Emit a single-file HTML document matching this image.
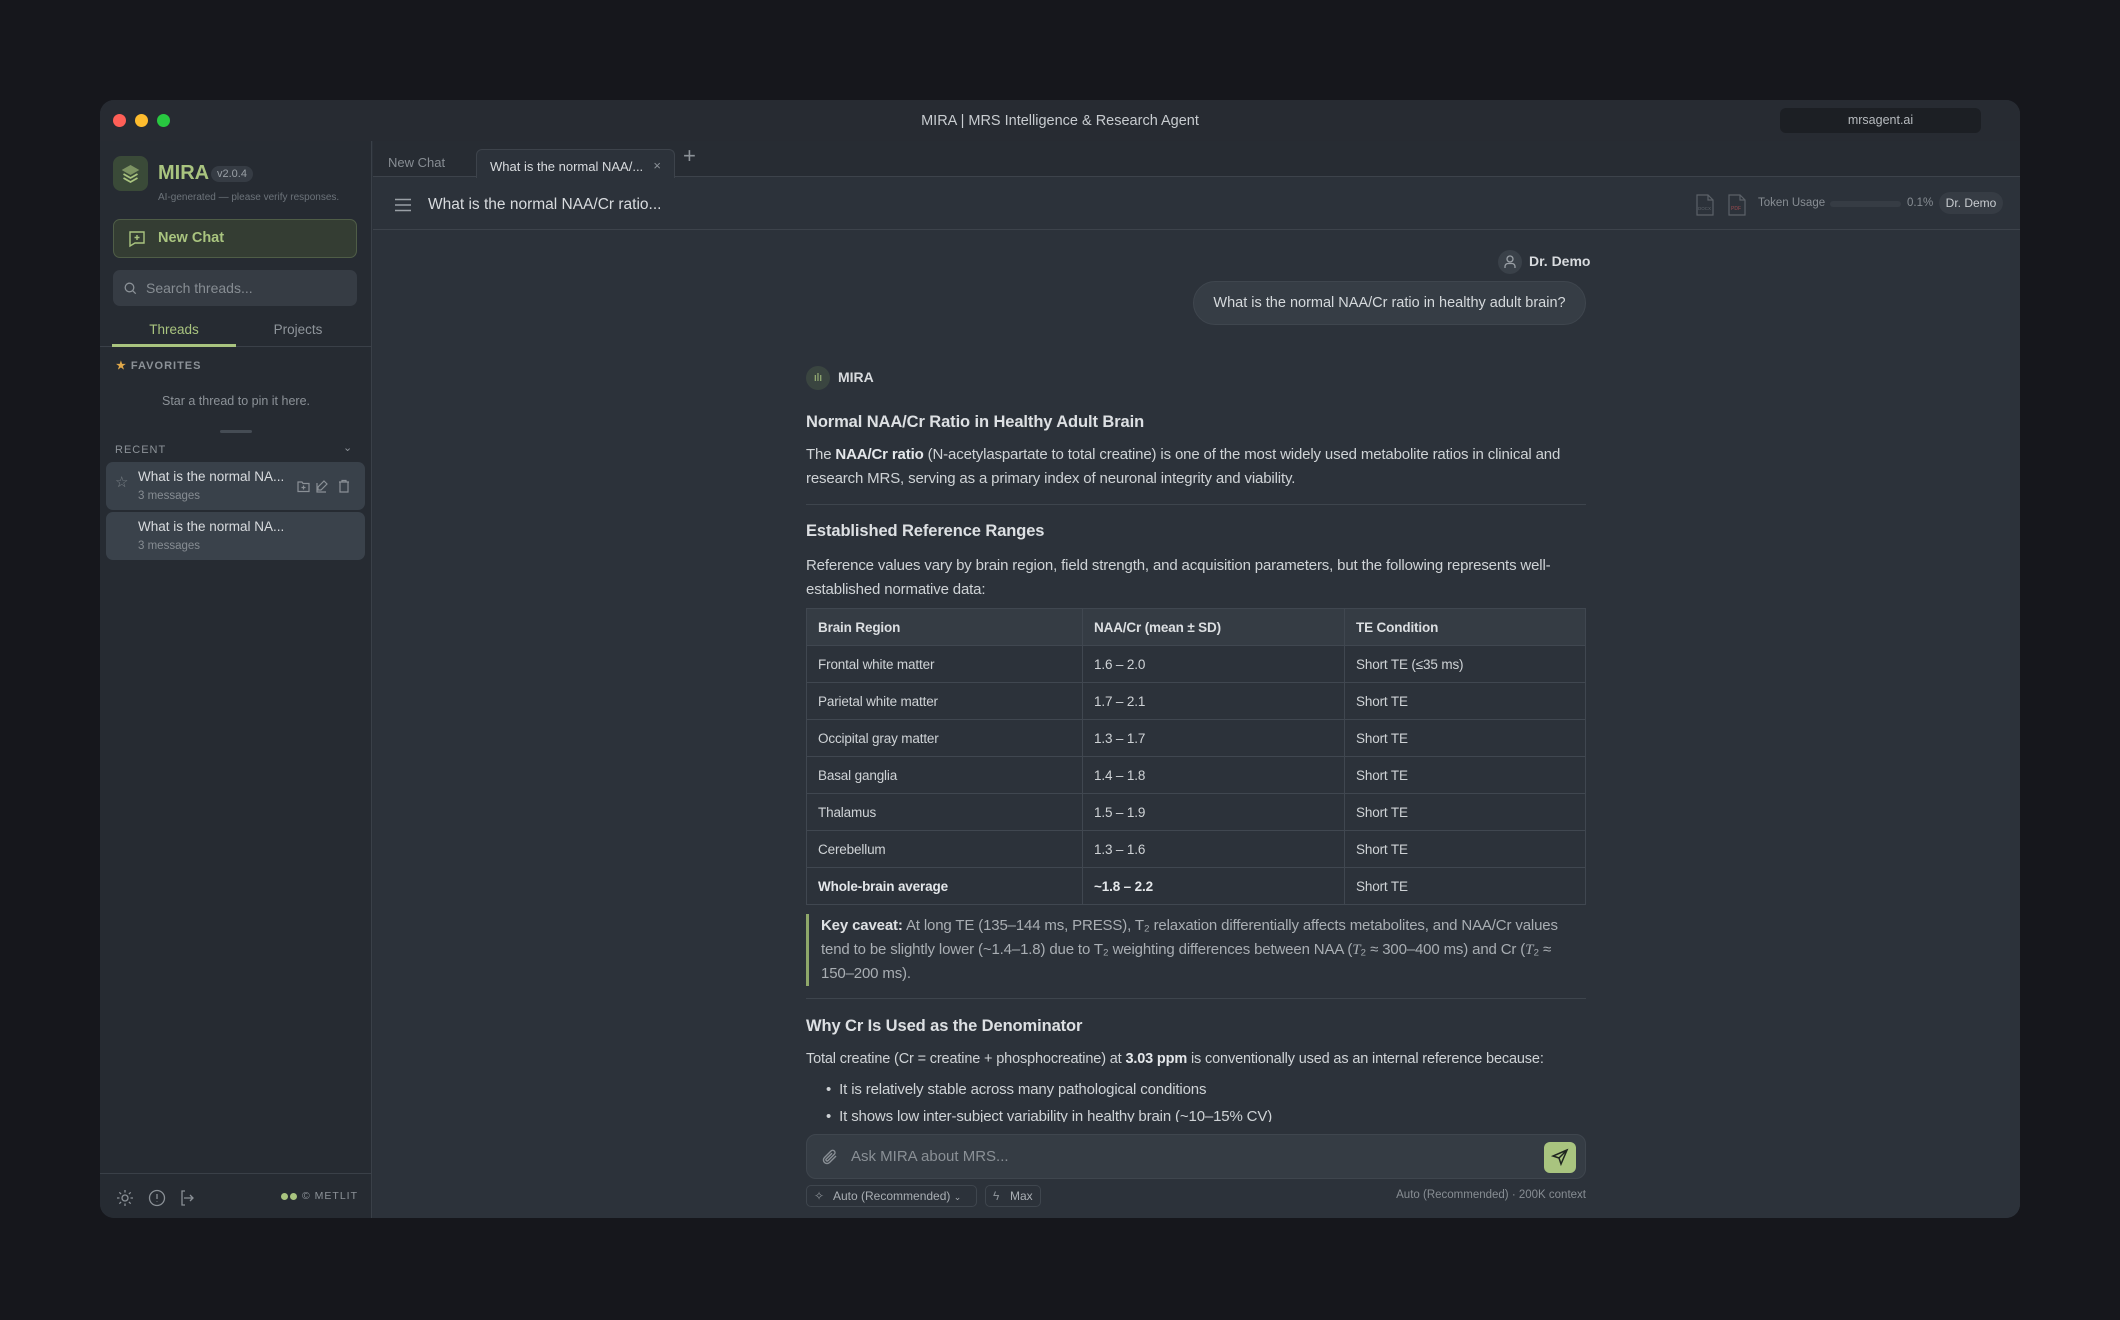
<!DOCTYPE html>
<html><head><meta charset="utf-8"><style>
*{box-sizing:border-box;margin:0;padding:0}
body{width:2120px;height:1320px;background:#16171c;font-family:"Liberation Sans",sans-serif;color:#d5d9dc;position:relative;overflow:hidden}
.win{position:absolute;left:100px;top:100px;width:1920px;height:1118px;background:#2b3139;border-radius:14px;overflow:hidden}
.titlebar{position:absolute;left:0;top:0;width:1920px;height:41px;background:#272b32}
.dot{position:absolute;top:14px;width:13px;height:13px;border-radius:50%}
.ttl{position:absolute;left:0;right:0;top:13px;text-align:center;font-size:14.5px;color:#c8ccd0}
.url{position:absolute;left:1680px;top:8px;width:201px;height:25px;border-radius:6px;background:#1c1f24;color:#b7bbbf;font-size:12.5px;text-align:center;line-height:25px}
.side{position:absolute;left:0;top:41px;width:272px;height:1077px;background:#262b32;border-right:1px solid #3a4048}
.abs{position:absolute}
.main{position:absolute;left:273px;top:41px;width:1647px;height:1077px;background:#2c323a}
.tabs{position:absolute;left:0;top:0;width:1647px;height:36px;background:#272c33;border-bottom:1px solid #3d434b}
.hdr{position:absolute;left:0;top:36px;width:1647px;height:53px;border-bottom:1px solid #3d434b}
.c{position:absolute;left:433px;width:780px;font-size:15px;letter-spacing:-0.15px;color:#cfd3d6}
.p{line-height:24px}
h3.c{font-size:16.5px;font-weight:bold;color:#dde0e3;letter-spacing:-0.1px}
table{border-collapse:collapse;width:780px;font-size:13.5px}
td,th{border:1px solid #404750;height:37px;padding:0 11px;text-align:left}
th{background:#353c44;font-weight:bold;color:#dcdfe2}
td{color:#cfd3d6}
.hr{height:1px;background:#3e454d}
</style></head><body>
<div class="win">
 <div class="titlebar">
  <div class="dot" style="left:13px;background:#fe5f57"></div>
  <div class="dot" style="left:35px;background:#febc2e"></div>
  <div class="dot" style="left:57px;background:#28c840"></div>
  <div class="ttl">MIRA | MRS Intelligence &amp; Research Agent</div>
  <div class="url">mrsagent.ai</div>
 </div>
 <div class="side">
  <div class="abs" style="left:13px;top:15px;width:35px;height:35px;border-radius:8px;background:#3a4a38">
   <svg width="35" height="35" viewBox="0 0 35 35" fill="none" stroke="#a9c47f" stroke-width="1.8"><path d="M17.5 10l7 4-7 4-7-4z" fill="#a9c47f" opacity=".6"/><path d="M10.5 18l7 4 7-4M10.5 22l7 4 7-4"/></svg>
  </div>
  <div class="abs" style="left:58px;top:21px;font-size:20px;font-weight:bold;color:#a9c47f">MIRA</div>
  <div class="abs" style="left:111px;top:25px;padding:2px 6px;border-radius:9px;background:#363c44;font-size:11px;color:#9aa0a6">v2.0.4</div>
  <div class="abs" style="left:58px;top:51px;font-size:10px;color:#6c737a">AI-generated — please verify responses.</div>
  <div class="abs" style="left:13px;top:78px;width:244px;height:39px;border-radius:7px;background:#343d33;border:1px solid #4f5d47;color:#a9c47f;font-size:14.5px;font-weight:bold;line-height:37px;padding-left:44px">New Chat
   <svg class="abs" style="left:14px;top:10px" width="18" height="18" viewBox="0 0 18 18" fill="none" stroke="#a9c47f" stroke-width="1.4"><path d="M2 2h14v11H7l-5 3z"/><path d="M9 5v5M6.5 7.5h5"/></svg></div>
  <div class="abs" style="left:13px;top:129px;width:244px;height:36px;border-radius:7px;background:#363c44;color:#878d93;font-size:14px;line-height:36px;padding-left:33px">Search threads...
   <svg class="abs" style="left:11px;top:12px" width="13" height="13" viewBox="0 0 13 13" fill="none" stroke="#8a9096" stroke-width="1.3"><circle cx="5.5" cy="5.5" r="4.3"/><path d="M8.7 8.7l3 3"/></svg></div>
  <div class="abs" style="left:12px;top:181px;width:124px;text-align:center;font-size:13.5px;color:#a9c47f">Threads</div>
  <div class="abs" style="left:136px;top:181px;width:124px;text-align:center;font-size:13.5px;color:#8f959b">Projects</div>
  <div class="abs" style="left:0;top:205px;width:272px;height:1px;background:#3a4048"></div>
  <div class="abs" style="left:12px;top:203px;width:124px;height:3px;background:#a9c47f"></div>
  <div class="abs" style="left:16px;top:218px;font-size:11px;letter-spacing:1px;color:#8c9298;font-weight:bold"><span style="color:#e0a84a">★</span> FAVORITES</div>
  <div class="abs" style="left:0;width:272px;top:253px;text-align:center;font-size:12.5px;color:#8c9298">Star a thread to pin it here.</div>
  <div class="abs" style="left:120px;top:289px;width:32px;height:3px;border-radius:2px;background:#454c54"></div>
  <div class="abs" style="left:15px;top:303px;font-size:11px;letter-spacing:1px;color:#8c9298">RECENT</div>
  <div class="abs" style="left:243px;top:300px;font-size:11px;color:#8c9298">⌄</div>
  <div class="abs" style="left:6px;top:321px;width:259px;height:48px;border-radius:7px;background:#39414a">
   <div class="abs" style="left:9px;top:11px;font-size:15px;color:#7a8187">☆</div>
   <div class="abs" style="left:32px;top:7px;font-size:13.5px;color:#d8dbde">What is the normal NA...</div>
   <div class="abs" style="left:32px;top:28px;font-size:11.5px;color:#878d93">3 messages</div>
   <svg class="abs" style="left:191px;top:16px" width="62" height="16" viewBox="0 0 62 16" fill="none" stroke="#8a9096" stroke-width="1.2"><path d="M1 4h4l1 1.5h6v8H1z M6.5 7.5v4M4.5 9.5h4"/><path d="M27 3l3 3-6 6h-3v-3z M20 5v9h9"/><path d="M42 4h10M45 4V2.5h4V4M43 4.5v9.5h8V4.5"/></svg>
  </div>
  <div class="abs" style="left:6px;top:371px;width:259px;height:48px;border-radius:7px;background:#3a424b">
   <div class="abs" style="left:32px;top:7px;font-size:13.5px;color:#d8dbde">What is the normal NA...</div>
   <div class="abs" style="left:32px;top:28px;font-size:11.5px;color:#878d93">3 messages</div>
  </div>
  <div class="abs" style="left:0;top:1032px;width:272px;height:1px;background:#3a4048"></div>
  <svg class="abs" style="left:16px;top:1047px" width="80" height="20" viewBox="0 0 80 20" fill="none" stroke="#8a9096" stroke-width="1.3"><circle cx="9" cy="10" r="3"/><path d="M9 2v2.5M9 15.5V18M1 10h2.5M14.5 10H17M3.3 4.3l1.8 1.8M12.9 13.9l1.8 1.8M3.3 15.7l1.8-1.8M12.9 6.1l1.8-1.8"/><circle cx="41" cy="10" r="7.5"/><path d="M41 6v5M41 13.5v.5"/><path d="M69 3h-3v14h3M68 10h9M74 7l3 3-3 3"/></svg>
  <div class="abs" style="left:181px;top:1052px;width:7px;height:7px;border-radius:50%;background:#a9c47f"></div>
  <div class="abs" style="left:190px;top:1052px;width:7px;height:7px;border-radius:50%;background:#a9c47f"></div>
  <div class="abs" style="left:202px;top:1049px;font-size:10.5px;letter-spacing:1px;color:#8c9298">© METLIT</div>
 </div>
 <div class="main">
  <div class="tabs">
   <div class="abs" style="left:15px;top:14px;font-size:13px;color:#878d93">New Chat</div>
   <div class="abs" style="left:103px;top:8px;width:199px;height:29px;background:#2c323a;border:1px solid #3d434b;border-bottom:none;border-radius:6px 6px 0 0;font-size:13px;color:#d8dbde;padding:9px 0 0 13px">What is the normal NAA/...<span style="position:absolute;right:13px;top:8px;color:#8c9298">×</span></div>
   <div class="abs" style="left:310px;top:2px;font-size:22px;color:#8c9298;font-weight:300">+</div>
  </div>
  <div class="hdr">
   <svg class="abs" style="left:22px;top:21px" width="16" height="14" viewBox="0 0 16 14" stroke="#9aa0a6" stroke-width="1.5"><path d="M0 1.5h16M0 7h16M0 12.5h16"/></svg>
   <div class="abs" style="left:55px;top:19px;font-size:15.5px;color:#d8dbde">What is the normal NAA/Cr ratio...</div>
   <svg class="abs" style="left:1323px;top:17px" width="52" height="22" viewBox="0 0 52 22" fill="none" stroke="#5b6168" stroke-width="1.2"><path d="M1 1h11l5 5v15H1z M12 1v5h5"/><path d="M33 1h11l5 5v15H33z M44 1v5h5"/><text x="2" y="16" font-size="4.5" fill="#5b6168" stroke="none" font-family="Liberation Sans">DOCX</text><text x="35" y="16" font-size="5" fill="#9a4a4f" stroke="none" font-family="Liberation Sans">PDF</text></svg>
   <div class="abs" style="left:1385px;top:20px;font-size:11.5px;color:#878d93">Token Usage</div>
   <div class="abs" style="left:1457px;top:24px;width:71px;height:6px;border-radius:3px;background:#363c44"></div>
   <div class="abs" style="left:1534px;top:20px;font-size:11.5px;color:#878d93">0.1%</div>
   <div class="abs" style="left:1566px;top:15px;width:64px;height:22px;border-radius:11px;background:#363c44;font-size:12px;color:#c8ccd0;text-align:center;line-height:22px">Dr. Demo</div>
  </div>
  <!-- chat -->
  <div class="abs" style="left:1125px;top:109px;width:24px;height:24px;border-radius:50%;background:#3a4149"><svg width="24" height="24" viewBox="0 0 24 24" fill="none" stroke="#9aa0a6" stroke-width="1.3"><circle cx="12" cy="9" r="3"/><path d="M7 18v-1.5a3 3 0 0 1 3-3h4a3 3 0 0 1 3 3V18"/></svg></div>
  <div class="abs" style="left:1156px;top:112px;font-size:14px;font-weight:bold;color:#d8dbde">Dr. Demo</div>
  <div class="abs" style="left:820px;top:140px;width:393px;height:44px;border-radius:22px;background:#363d45;border:1px solid #3f464e;font-size:14.5px;color:#d5d9dc;line-height:42px;text-align:center">What is the normal NAA/Cr ratio in healthy adult brain?</div>
  <div class="abs" style="left:433px;top:225px;width:24px;height:24px;border-radius:50%;background:#3a4540;color:#a9c47f;font-size:11px;text-align:center;line-height:24px">ılı</div>
  <div class="abs" style="left:465px;top:228px;font-size:14px;font-weight:bold;color:#d8dbde">MIRA</div>
  <h3 class="c" style="top:272px">Normal NAA/Cr Ratio in Healthy Adult Brain</h3>
  <div class="c p" style="top:302px">The <b style="color:#e4e7ea">NAA/Cr ratio</b> (N-acetylaspartate to total creatine) is one of the most widely used metabolite ratios in clinical and research MRS, serving as a primary index of neuronal integrity and viability.</div>
  <div class="c hr" style="top:363px"></div>
  <h3 class="c" style="top:381px">Established Reference Ranges</h3>
  <div class="c p" style="top:413px">Reference values vary by brain region, field strength, and acquisition parameters, but the following represents well-established normative data:</div>
  <div class="c" style="top:467px"><table>
   <tr><th style="width:276px">Brain Region</th><th style="width:262px">NAA/Cr (mean ± SD)</th><th>TE Condition</th></tr>
   <tr><td>Frontal white matter</td><td>1.6 – 2.0</td><td>Short TE (≤35 ms)</td></tr>
   <tr><td>Parietal white matter</td><td>1.7 – 2.1</td><td>Short TE</td></tr>
   <tr><td>Occipital gray matter</td><td>1.3 – 1.7</td><td>Short TE</td></tr>
   <tr><td>Basal ganglia</td><td>1.4 – 1.8</td><td>Short TE</td></tr>
   <tr><td>Thalamus</td><td>1.5 – 1.9</td><td>Short TE</td></tr>
   <tr><td>Cerebellum</td><td>1.3 – 1.6</td><td>Short TE</td></tr>
   <tr><td><b style="color:#e4e7ea">Whole-brain average</b></td><td><b style="color:#e4e7ea">~1.8 – 2.2</b></td><td>Short TE</td></tr>
  </table></div>
  <div class="c p" style="top:773px;border-left:3px solid #8fa86a;padding-left:12px;padding-right:4px;color:#a9aeb3;font-size:15px">
   <b style="color:#dde0e3">Key caveat:</b> At long TE (135–144 ms, PRESS), T₂ relaxation differentially affects metabolites, and NAA/Cr values tend to be slightly lower (~1.4–1.8) due to T₂ weighting differences between NAA (<i style="font-family:'Liberation Serif'">T</i>₂ ≈ 300–400 ms) and Cr (<i style="font-family:'Liberation Serif'">T</i>₂ ≈ 150–200 ms).</div>
  <div class="c hr" style="top:857px"></div>
  <h3 class="c" style="top:876px">Why Cr Is Used as the Denominator</h3>
  <div class="c p" style="top:906px;font-size:14.5px;white-space:nowrap">Total creatine (Cr = creatine + phosphocreatine) at <b style="color:#e4e7ea">3.03 ppm</b> is conventionally used as an internal reference because:</div>
  <div class="c p" style="top:937px;padding-left:20px">• &nbsp;It is relatively stable across many pathological conditions</div>
  <div class="c p" style="top:964px;padding-left:20px;height:18px;overflow:hidden">• &nbsp;It shows low inter-subject variability in healthy brain (~10–15% CV)</div>
  <div class="abs" style="left:0;top:981px;width:1647px;height:120px;background:#2c323a"></div>
  <div class="abs" style="left:433px;top:993px;width:780px;height:45px;border-radius:10px;background:#353c44;border:1px solid #3f464e">
   <svg class="abs" style="left:14px;top:13px" width="18" height="18" viewBox="0 0 18 18" fill="none" stroke="#8a9096" stroke-width="1.4"><path d="M15 8l-6.5 6.5a3.5 3.5 0 0 1-5-5L10 3a2.3 2.3 0 0 1 3.3 3.3L7 12.6a1.2 1.2 0 0 1-1.7-1.7L11 5.2"/></svg>
   <div class="abs" style="left:44px;top:13px;font-size:15px;color:#8a9096">Ask MIRA about MRS...</div>
   <div class="abs" style="left:737px;top:7px;width:32px;height:31px;border-radius:6px;background:#a9c47f"><svg width="32" height="31" viewBox="0 0 32 31" fill="none" stroke="#1f2520" stroke-width="1.5"><path d="M23 8L9 14l6 2 2 6z M15 16l8-8"/></svg></div>
  </div>
  <div class="abs" style="left:433px;top:1044px;width:171px;height:22px;border:1px solid #3f464e;border-radius:5px;font-size:12px;color:#a9aeb3;line-height:20px;padding-left:26px">Auto (Recommended) <span style="font-size:9px">⌄</span><span class="abs" style="left:7px;top:0;color:#8a9096">✧</span></div>
  <div class="abs" style="left:612px;top:1044px;width:56px;height:22px;border:1px solid #3f464e;border-radius:5px;font-size:12px;color:#a9aeb3;line-height:20px;padding-left:24px"><span class="abs" style="left:7px;color:#8a9096">ϟ</span>Max</div>
  <div class="abs" style="left:1013px;top:1048px;width:200px;text-align:right;font-size:11.5px;color:#878d93">Auto (Recommended) · 200K context</div>
 </div>
</div>
</body></html>
